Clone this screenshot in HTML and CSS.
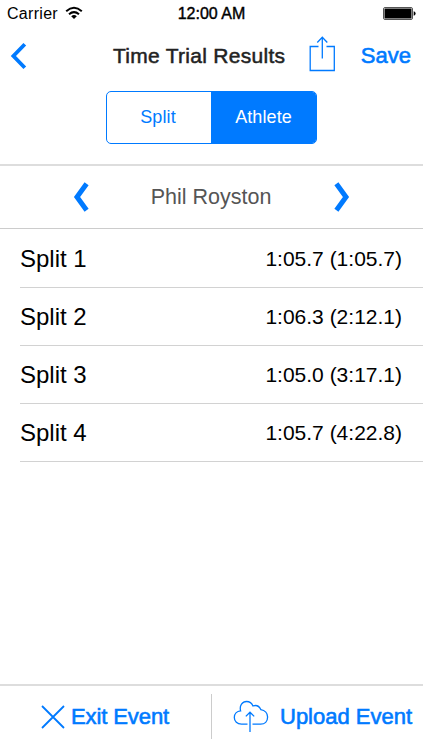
FILE: index.html
```html
<!DOCTYPE html>
<html lang="en">
<head>
  <meta charset="UTF-8">
  <meta name="viewport" content="width=device-width, initial-scale=1.0">
  <title>Time Trial Results</title>
  <link rel="stylesheet" href="styles.css">
</head>
<body>
  <div class="app">
    <div class="status-bar">
      <div class="carrier">
        <span>Carrier</span>
        <svg class="wifi" width="18" height="14" viewBox="0 0 18 14" fill="none" stroke="#000" stroke-width="2">
          <path d="M1.2 5.2Q9 -1.6 16.8 5.2"/>
          <path d="M4 8.2Q9 4 14 8.2"/>
          <path d="M6.2 10.2Q9 8 11.8 10.2L9 13Z" fill="#000" stroke="none"/>
        </svg>
      </div>
      <span class="clock">12:00 AM</span>
      <svg class="battery" width="33" height="14" viewBox="0 0 33 14">
        <rect x="0.5" y="0.5" width="29" height="12" rx="1.5" fill="#fff" stroke="#555"/>
        <rect x="1.5" y="1.5" width="27" height="10" rx="0.5"/>
        <path d="M30.7 4.3Q32.6 4.6 32.6 6.5T30.7 8.7Z"/>
      </svg>
    </div>

    <header class="nav-bar">
      <button class="back-btn" aria-label="Back">
        <svg width="17" height="28" viewBox="0 0 17 28" fill="none" stroke="#007aff" stroke-width="3.8">
          <path d="M14.8 2.2L3.4 14L14.8 25.8"/>
        </svg>
      </button>
      <h1>Time Trial Results</h1>
      <button class="share-btn" aria-label="Share">
        <svg width="27" height="36" viewBox="0 0 27 36" fill="none" stroke="#007aff" stroke-width="1.3">
          <path d="M9.5 10.5H1.2V34.5H25.3V10.5H17.5"/>
          <path d="M13.3 22.5V1.3M8.3 6.5L13.3 1.3L18.3 6.5"/>
        </svg>
      </button>
      <button class="save-btn">Save</button>
    </header>

    <div class="segmented">
      <button class="segment">Split</button>
      <button class="segment active">Athlete</button>
    </div>

    <div class="athlete-picker">
      <button aria-label="Previous athlete">
        <svg width="17" height="32" viewBox="0 0 17 32" fill="none" stroke="#007aff" stroke-width="5">
          <path d="M13.6 2.8L4 16L13.6 29.2"/>
        </svg>
      </button>
      <span class="athlete-name">Phil Royston</span>
      <button aria-label="Next athlete">
        <svg width="17" height="32" viewBox="0 0 17 32" fill="none" stroke="#007aff" stroke-width="5">
          <path d="M3.4 2.8L13 16L3.4 29.2"/>
        </svg>
      </button>
    </div>

    <ul class="splits">
      <li><span class="split-name">Split 1</span><span class="split-time">1:05.7 (1:05.7)</span></li>
      <li><span class="split-name">Split 2</span><span class="split-time">1:06.3 (2:12.1)</span></li>
      <li><span class="split-name">Split 3</span><span class="split-time">1:05.0 (3:17.1)</span></li>
      <li><span class="split-name">Split 4</span><span class="split-time">1:05.7 (4:22.8)</span></li>
    </ul>

    <footer class="toolbar">
      <button class="exit-btn">
        <svg width="24" height="24" viewBox="0 0 24 24" fill="none" stroke="#007aff" stroke-width="1.8">
          <path d="M1 1L23 23M23 1L1 23"/>
        </svg>
        <span>Exit Event</span>
      </button>
      <button class="upload-btn">
        <svg width="36" height="33" viewBox="0 0 36 33" fill="none" stroke="#007aff" stroke-width="1.3">
          <path d="M14.5 24.2H8.5C4.2 24.2 1.3 21.4 1.3 17.6C1.3 14 3.8 11.2 7.6 10.9C6.2 5.6 9.4 1.5 13.6 1.5C16.8 1.5 18.9 3.4 20 6C24 4.6 26.4 6.6 27.8 9.6C32 10.2 34.6 13.4 34.6 17C34.6 21.4 31.8 24.2 27.6 24.2H19.5"/>
          <path d="M17 32V12.2M12.8 16.4L17 12.2L21.2 16.4"/>
        </svg>
        <span>Upload Event</span>
      </button>
    </footer>
  </div>
</body>
</html>
```
FILE: styles.css
```css
* {
  margin: 0;
  padding: 0;
  box-sizing: border-box;
}

body {
  font-family: "Liberation Sans", Arial, sans-serif;
  background: #fff;
  color: #000;
}

button {
  font-family: inherit;
  background: none;
  border: none;
  color: #007aff;
  cursor: pointer;
}

svg {
  display: block;
  flex-shrink: 0;
}

.app {
  display: flex;
  flex-direction: column;
  height: 750px;
  overflow: hidden;
}

.status-bar {
  display: grid;
  grid-template-columns: 1fr auto 1fr;
  align-items: center;
  height: 28px;
  padding: 0 7px;
  font-size: 16px;
}

.carrier {
  display: flex;
  align-items: center;
  gap: 7px;
  letter-spacing: 0.3px;
}

.wifi {
  margin-top: -2px;
}

.clock {
  -webkit-text-stroke: 0.4px;
}

.battery {
  justify-self: end;
}

.nav-bar {
  display: flex;
  align-items: center;
  height: 56px;
  padding: 0 12px 0 10px;
}

.nav-bar h1 {
  margin-left: 86px;
  color: #222;
  font-size: 21px;
  font-weight: 400;
  letter-spacing: 0.28px;
  white-space: nowrap;
  -webkit-text-stroke: 0.5px;
}

.share-btn {
  margin: -4px 0 0 24px;
}

.save-btn {
  margin-left: auto;
  font-size: 22px;
  -webkit-text-stroke: 0.6px;
}

.segmented {
  display: flex;
  width: 211px;
  height: 53px;
  margin: 7px auto 0;
  border: 1.5px solid #007aff;
  border-radius: 5px;
  overflow: hidden;
}

.segment {
  width: 104px;
  padding-right: 2px;
  padding-bottom: 1px;
  font-size: 18px;
  letter-spacing: 0.1px;
}

.segment.active {
  flex: 1;
  padding-right: 0;
  background: #007aff;
  color: #fff;
}

.athlete-picker {
  display: flex;
  align-items: center;
  justify-content: space-between;
  height: 65px;
  margin-top: 20px;
  padding: 0 73px;
  border-top: 2px solid #ddd;
  border-bottom: 1px solid #ccc;
}

.athlete-name {
  margin-right: 1px;
  color: #555;
  font-size: 21.5px;
}

.splits {
  list-style: none;
  padding: 1px 0 0 20px;
}

.splits li {
  display: flex;
  align-items: center;
  justify-content: space-between;
  height: 58px;
  padding-right: 21px;
  border-bottom: 1px solid #d2d2d2;
}

.split-name {
  font-size: 24px;
}

.split-time {
  font-size: 21px;
}

.toolbar {
  display: flex;
  height: 66px;
  margin-top: auto;
  padding: 8px 0 11px;
  border-top: 2px solid #ddd;
}

.toolbar button {
  display: flex;
  align-items: center;
  font-size: 22px;
  white-space: nowrap;
  -webkit-text-stroke: 0.6px;
}

.toolbar .exit-btn {
  width: 212px;
  padding-left: 41px;
  gap: 6px;
  border-right: 1px solid #ccc;
  letter-spacing: -0.1px;
}

.toolbar .upload-btn {
  flex: 1;
  padding-left: 21px;
  gap: 11px;
}
```
